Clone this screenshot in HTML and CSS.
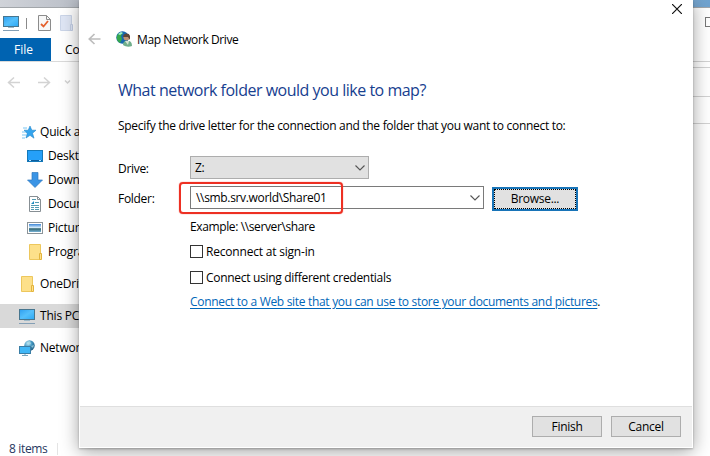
FILE: index.html
```html
<!DOCTYPE html>
<html lang="en">
<head>
<meta charset="utf-8">
<title>Map Network Drive</title>
<link rel="stylesheet" href="styles.css">
</head>
<body>
<svg class="defs" width="0" height="0">
  <defs>
    <linearGradient id="blue" x1="0" y1="0" x2="1" y2="1"><stop offset="0" stop-color="#2e9ff0"/><stop offset=".5" stop-color="#55c0fb"/><stop offset="1" stop-color="#2ba8f5"/></linearGradient>
    <linearGradient id="sky" x1="0" y1="0" x2="0" y2="1"><stop offset="0" stop-color="#3d86d8"/><stop offset=".45" stop-color="#d5ecfa"/><stop offset=".6" stop-color="#32646f"/><stop offset="1" stop-color="#78b5d8"/></linearGradient>
    <radialGradient id="globe" cx=".35" cy=".3" r=".8"><stop offset="0" stop-color="#b5e6f8"/><stop offset=".5" stop-color="#3e92bd"/><stop offset="1" stop-color="#215779"/></radialGradient>
    <symbol id="pc" viewBox="0 0 16 16"><rect x=".5" y="1.500" width="15" height="10" fill="url(#blue)" stroke="#47768f"/><path d="M5 12.500h6" stroke="#9db9c8"/><path d="M0 15.500h16" stroke="#849fb5"/></symbol>
    <symbol id="folder" viewBox="0 0 16 16"><path d="M2.500.5h11v15h-11z" fill="#fde08a" stroke="#edc75d"/><path d="M12.500 9.500h2v6h-2z" fill="#ffe18c" stroke="#e3b43d"/></symbol>
  </defs>
</svg>
<div class="screen">
  <div class="explorer">
    <div class="strip"></div>
    <div class="quickbar">
      <svg width="16" height="16"><use href="#pc"/></svg>
      <i class="sep"></i>
      <svg class="check" width="13" height="16" viewBox="0 0 13 16"><path d="M.5.5h8l4 4v11H.5z" fill="#f7f7f7" stroke="#8c8c8c"/><path d="M8.500.5v4h4" fill="none" stroke="#8c8c8c"/><path d="M3 9l2.500 2.500L10 6" fill="none" stroke="#e4602d" stroke-width="1.800"/></svg>
      <svg width="13" height="16" viewBox="0 0 13 16"><path d="M.5.5h11v15H.5z" fill="#dfe6f5" stroke="#cbd5e8"/><path d="M10.500 9.500h2v6h-2z" fill="#dfe6f5" stroke="#c3cee4"/></svg>
      <i class="maximize"></i>
    </div>
    <div class="tabs"><b class="file">File</b><span class="tab">Computer</span></div>
    <div class="nav">
      <svg width="80" height="40" fill="none" stroke="#d3d3d3" stroke-width="1.500"><path d="M20 20.500H9m5-5l-5.500 5 5.500 5M38 20.500h11m-5-5l5.500 5-5.500 5"/><path d="M65 18.500l2.500 2.500 2.500-2.500"/></svg>
    </div>
    <div class="tree">
      <div class="item"><svg width="16" height="16"><path d="M9 2l1.800 4.200H15l-3.500 3 1.500 5L9 11.300 5 14l1.200-4.700L3 6.200h4.200z" fill="#32a4ee" stroke="#2387cb" stroke-width=".6"/><path d="M2 4h4M1 8h4M1 11h4M1 14h3" stroke="#55b6ef" stroke-width=".8"/></svg><span>Quick access</span></div>
      <div class="item sub"><svg width="16" height="16"><rect x=".5" y="2.500" width="15" height="11" fill="#25a0f9" stroke="#1479ba"/><path d="M1 12.500h14" stroke="#0c5d9c"/><path d="M2 12.500h2M12 12.500h2" stroke="#b9e5ff"/></svg><span>Desktop</span></div>
      <div class="item sub"><svg width="16" height="16"><path d="M5 .5h6V8h4.500L8 15.500.5 8H5z" fill="#3a94e5" stroke="#2f79be" stroke-width=".7"/></svg><span>Downloads</span></div>
      <div class="item sub"><svg width="16" height="16"><path d="M2.500.5h8l3 3v12h-11z" fill="#fff" stroke="#878f94"/><path d="M10.500.5v3h3" fill="none" stroke="#878f94"/><path d="M5 3.500h4M8 6.500h4M4 9.500h8M4 11.500h3m1 0h4M4 13.500h3m1 0h4" stroke="#549bb1"/><path d="M4 8l3-3v3z" fill="#1d8cc0"/></svg><span>Documents</span></div>
      <div class="item sub"><svg width="16" height="16"><rect x=".5" y="2.500" width="15" height="11" fill="#fff" stroke="#8c9499"/><rect x="2" y="4" width="12" height="8" fill="url(#sky)"/></svg><span>Pictures</span></div>
      <div class="item sub"><svg width="16" height="16"><use href="#folder"/></svg><span>Program</span></div>
      <div class="item gap"><svg width="16" height="16"><use href="#folder"/></svg><span>OneDrive</span></div>
      <div class="item gap selected"><svg width="16" height="16"><use href="#pc"/></svg><span>This PC</span></div>
      <div class="item gap"><svg width="16" height="16"><circle cx="10.500" cy="5.500" r="5.200" fill="url(#globe)"/><path d="M8 2l3-1 1 3-3 1zM12 6l3-1-1 3z" fill="#b1dce5" opacity=".7"/><rect x=".5" y="6.500" width="11" height="7" fill="#40b7f7" stroke="#3a7ea6"/><path d="M6 14v1.500M3 15.500h6" stroke="#78a6bf"/></svg><span>Network</span></div>
    </div>
    <div class="status"><span>8 items</span><i></i></div>
    <div class="right-lines"><i></i><i></i><i></i><i></i></div>
  </div>
  <div class="dialog">
    <div class="close"><svg width="10" height="10"><path d="M0 0l10 10M10 0L0 10" stroke="#111" stroke-width="1.200"/></svg></div>
    <div class="title">
      <svg width="13" height="12" fill="none" stroke="#bdbdbd" stroke-width="1.700"><path d="M12.500 6H1.500m5-5L1.300 6l5.200 5"/></svg>
      <svg class="logo" width="16" height="16"><circle cx="6.500" cy="6.500" r="6.200" fill="#1768ae"/><path d="M1 5c1-4 5-4 6-3L5 5l1 3-2 4C2 11 0 8 1 5z" fill="#35a84c"/><path d="M2 3l3-2 2 1-3 2z" fill="#a4ecd5"/><path d="M7 14c0-4 3-5 5-4 3 0 4 2 4 5-3 1-6 1-9-1z" fill="#70ae8b"/><circle cx="10.500" cy="6.500" r="3" fill="#bd9173"/><path d="M7 6c0-4 6-5 7-1v4l-2-3z" fill="#5d4638"/><path d="M9 10l3 4 1-4z" fill="#d6e5d4"/></svg>
      <span class="t-title">Map Network Drive</span>
    </div>
    <h1>What network folder would you like to map?</h1>
    <p class="intro">Specify the drive letter for the connection and the folder that you want to connect to:</p>
    <div class="row">
      <label>Drive:</label>
      <div class="combo drive"><span>Z:</span><svg width="10" height="6"><path d="M.5.5L5 5 9.500.5" fill="none" stroke="#555" stroke-width="1.100"/></svg></div>
    </div>
    <div class="row folder-row">
      <label>Folder:</label>
      <div class="combo path"><span>\\smb.srv.world\Share01</span><svg width="10" height="6"><path d="M.5.5L5 5 9.500.5" fill="none" stroke="#555" stroke-width="1.100"/></svg><i class="mark"></i></div>
      <div class="browse"><span>Browse...</span></div>
    </div>
    <div class="options">
      <div class="example">Example: \\server\share</div>
      <div class="option"><i></i><span class="t-reconnect">Reconnect at sign-in</span></div>
      <div class="option"><i></i><span>Connect using different credentials</span></div>
      <div class="link"><a>Connect to a Web site that you can use to store your documents and pictures</a>.</div>
    </div>
    <div class="footer"><div class="button">Finish</div><div class="button">Cancel</div></div>
  </div>
</div>
</body>
</html>
```
FILE: styles.css
```css
* { box-sizing: border-box; }
body { margin: 0; font: 12px/16px "Open Sans", "Noto Sans", sans-serif; color: #000; letter-spacing: -.3px; }
svg { display: block; flex: none; }
i { display: block; flex: none; }
.defs { position: absolute; }
.screen { position: relative; width: 710px; height: 456px; overflow: hidden; background: #fff; white-space: nowrap; }
.explorer { height: 456px; display: flex; flex-direction: column; }
.strip { height: 8px; flex: none; background: linear-gradient(90deg, #d0d3d9 0, #b9bec7 80px, #a5bace 600px, #6fa3d0 710px); border-bottom: 1px solid #a2a6aa; }
.quickbar { height: 30px; flex: none; display: flex; align-items: center; padding-left: 3px; }
.sep { width: 1px; height: 11px; background: #8a8a8a; margin: 0 11px 0 7px; }
.check { margin-right: 9px; }
.maximize { margin: -2px 0 0 632px; width: 10px; height: 10px; border: 1px solid #777; }
.tabs { height: 24px; flex: none; display: flex; line-height: 24px; border-bottom: 1px solid #dadada; }
.file { width: 51px; height: 23px; background: #0063b1; color: #fff; font-weight: 400; text-align: center; padding-right: 4px; letter-spacing: .05px; }
.tab { margin-left: 14px; letter-spacing: 0; }
.nav { height: 40px; flex: none; }
.tree { margin-top: 18px; width: 200px; }
.item { height: 24px; display: flex; align-items: center; gap: 5px; padding-left: 19px; }
.item span { letter-spacing: -.2px; }
.item:first-child svg { margin-left: 2px; margin-right: -2px; }
.sub { padding-left: 27px; }
.gap { margin-top: 8px; }
.selected { background: #d9d9d9; }
.status { margin-top: auto; height: 14px; display: flex; align-items: center; gap: 10px; padding-left: 9px; color: #27375f; letter-spacing: -.35px; }
.status i { width: 1px; height: 12px; background: #e4e4e4; }
.right-lines { position: absolute; left: 693px; top: 61px; width: 17px; }
.right-lines i { height: 1px; background: #d2d2d2; margin-bottom: 5px; }
.right-lines i:nth-child(2) { margin-bottom: 28px; }
.right-lines i:nth-child(3) { margin-bottom: 26px; }
.dialog { position: absolute; left: 79px; top: 0; width: 614px; height: 448px; display: flex; flex-direction: column; background: #fff; border: solid #fff; border-width: 0 1px 1px; box-shadow: 0 1px 2px rgba(0,0,0,.25), 0 3px 17px rgba(0,0,0,.38); }
.close { height: 29px; display: flex; justify-content: flex-end; padding: 4px 10px 0 0; flex: none; }
.title { height: 20px; display: flex; align-items: center; padding-left: 8px; flex: none; letter-spacing: -.4px; }
.t-title { padding-top: 2px; }
.logo { margin: 0 5px 0 15px; }
h1 { margin: 31px 0 0 38px; height: 20px; font: 16px/20px "Open Sans", "Noto Sans", sans-serif; color: #17408f; letter-spacing: -.49px; flex: none; }
.intro { margin: 18px 0 22px 38px; height: 16px; flex: none; }
.row { height: 24px; display: flex; padding-left: 38px; flex: none; }
.row label { width: 72px; padding-top: 5px; }
.folder-row { margin-top: 6px; }
.combo { height: 24px; display: flex; align-items: center; justify-content: space-between; padding: 0 3px 0 4px; }
.drive { width: 179px; background: #e1e1e1; border: 1px solid #adadad; height: 23px; }
.path { position: relative; width: 294px; height: 23px; border: 1px solid #7a7a7a; padding-left: 5px; }
.path span { letter-spacing: -.33px; }
.mark { position: absolute; left: -12px; top: -5px; width: 164px; height: 32px; border: 2px solid #ed3023; border-radius: 4px; box-shadow: 0 0 1px #ed3023; }
.browse { margin: 1px 0 0 8px; width: 86px; height: 24px; border: 2px solid #1874b8; background: #e1e1e1; }
.browse span { display: block; height: 20px; line-height: 18px; text-align: center; border: 1px dotted #000; }
.options { padding-left: 110px; }
.example { height: 16px; margin: 9px 0 10px; letter-spacing: -.38px; }
.option { height: 13px; display: flex; align-items: center; gap: 3px; margin-bottom: 13px; }
.option i { width: 13px; height: 13px; border: 1px solid #333; }
.t-reconnect { letter-spacing: -.2px; }
.link { margin-top: -3px; letter-spacing: -.315px; }
.link a { color: #0066b8; text-decoration: underline; text-underline-offset: 2px; }
.footer { margin-top: auto; height: 41px; flex: none; background: #f0f0f0; border-top: 1px solid #dfdfdf; display: flex; justify-content: flex-end; gap: 9px; padding: 9px 11px 0 0; }
.button { width: 70px; height: 21px; line-height: 20px; text-align: center; background: #e1e1e1; border: 1px solid #adadad; }
```
